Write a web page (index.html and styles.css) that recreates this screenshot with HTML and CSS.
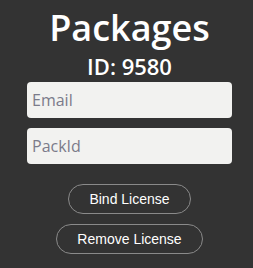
FILE: index.html
```html
<!DOCTYPE html>
<html lang="en">
<head>
  <meta charset="UTF-8" />
  <meta name="viewport" content="width=device-width,initial-scale=1.0" />
  <title>Packages</title>
  <link rel="stylesheet" href="styles.css">
</head>
<body>

  <div class="container">
    <h1 class="title">Packages</h1>
    <h2 class="sub_title">ID: 9580</h2>

    <div class="form">
      <input type="text" placeholder="Email" />
      <input type="text" placeholder="PackId" />
    </div>

    <div class="buttons">
      <button>Bind License</button>
      <button>Remove License</button>
    </div>
  </div>

</body>
</html>
```

FILE: styles.css
```css
body {
  margin: 0;
  padding: 0;
  background: #333333;
  font-family: "Open Sans", sans-serif;
}

.container {
  display: flex;
  flex-direction: column;
  align-items: center;
  padding-top: 8px;
  padding-left: 6px;
}

.title {
  margin: 0;
  color: white;
  font-size: 36px;
  font-weight: 600;
  line-height: 40px;
}

.sub_title {
  margin: 4px 0 0;
  color: white;
  font-size: 22px;
  font-weight: 600;
  line-height: 28px;
}

/* ========================== */
/* 入力欄 */
/* ========================== */

.form {
  display: flex;
  flex-direction: column;
  gap: 10px;
  margin-top: 2px;
}

.form input {
  box-sizing: border-box;
  width: 205px;
  height: 36px;
  border: none;
  border-radius: 4px;
  background: #f2f2f0;
  padding: 0 5px;
  font-family: "Open Sans", sans-serif;
  font-size: 16px;
}

.form input::placeholder {
  color: #7b7b8a;
}

/* ========================== */
/* ボタン */
/* ========================== */

.buttons {
  display: flex;
  flex-direction: column;
  align-items: center;
  gap: 10px;
  margin-top: 20px;
}

.buttons button {
  height: 30px;
  padding: 0 20px;
  background: transparent;
  border: 1px solid #8a8a8a;
  border-radius: 15px;
  color: white;
  font-family: "Liberation Sans", Arial, sans-serif;
  font-size: 14px;
  cursor: pointer;
}
```
